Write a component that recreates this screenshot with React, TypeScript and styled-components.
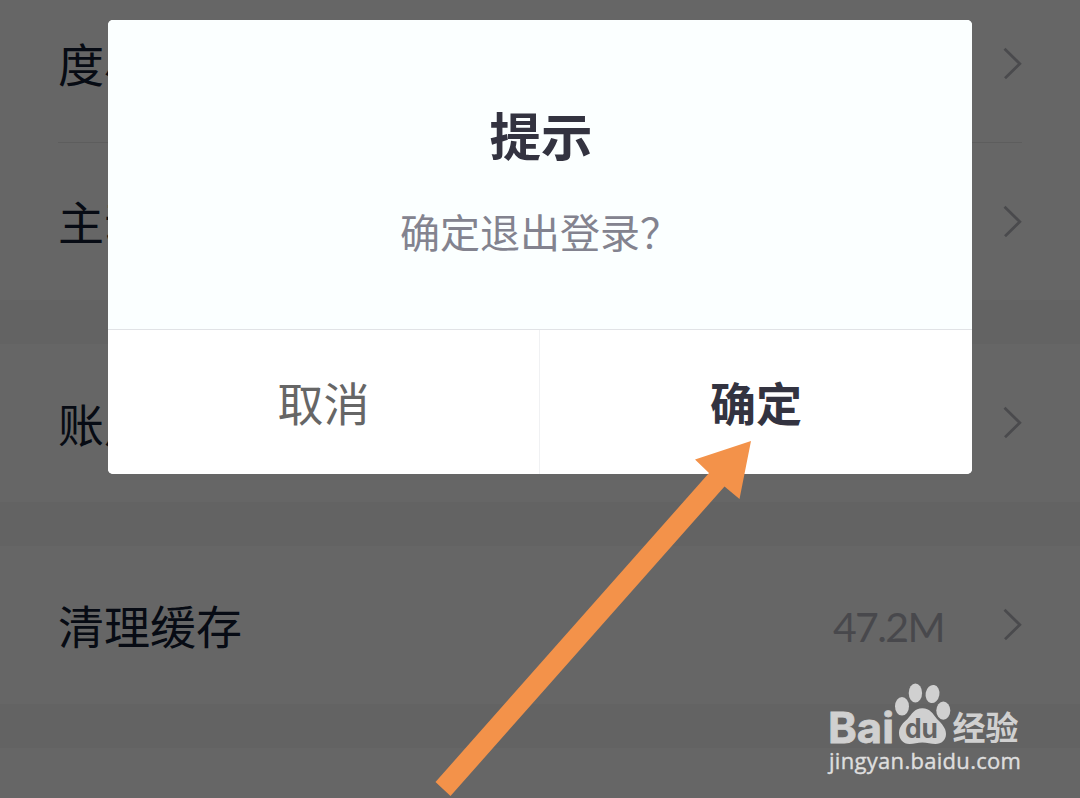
import styled, { createGlobalStyle } from 'styled-components';

const GlobalStyle = createGlobalStyle`
  * { box-sizing: border-box; }
  body {
    margin: 0;
    overflow: hidden;
    font-family: 'Noto Sans CJK SC', 'Noto Sans', sans-serif;
  }
`;

const Page = styled.div`
  position: relative;
  width: 1080px;
  height: 798px;
  overflow: hidden;
  background: #fff;
`;

const List = styled.div`
  display: flex;
  flex-direction: column;
  gap: 44px;
  margin-top: -15px;
  background: #f8f8f8;
`;

const Group = styled.div`
  background: #fff;
`;

const Row = styled.div<{ $height?: number }>`
  display: flex;
  align-items: center;
  height: ${p => p.$height || 158}px;
  padding: 0 58px;
`;

const Divider = styled.div`
  height: 1px;
  margin: 0 58px;
  background: #e8e8e8;
`;

const Label = styled.span`
  flex: 1;
  padding-bottom: 3px;
  font-size: 46px;
  line-height: 60px;
  color: #121c32;
`;

const Value = styled.span`
  padding-top: 4px;
  margin-right: 58px;
  font-family: Lato, sans-serif;
  font-size: 41px;
  line-height: 50px;
  letter-spacing: -1.6px;
  color: #b4b5bd;
`;

const Mask = styled.div`
  position: absolute;
  inset: 0;
  display: flex;
  justify-content: center;
  align-items: flex-start;
  padding-top: 20px;
  background: rgba(0, 0, 0, 0.6);
`;

const Dialog = styled.div`
  width: 864px;
  height: 454px;
  display: flex;
  flex-direction: column;
  border-radius: 5px;
  overflow: hidden;
  background: #fff;
`;

const DialogBody = styled.div`
  height: 310px;
  padding-top: 76px;
  text-align: center;
  background: #fbffff;
  border-bottom: 1px solid #e1e3e6;
`;

const Title = styled.h3`
  margin: 0 0 29px;
  padding-left: 2px;
  font-size: 51.5px;
  line-height: 76px;
  font-weight: 700;
  color: #333340;
`;

const Message = styled.p`
  margin: 0;
  font-size: 40px;
  line-height: 60px;
  color: #83838f;
`;

const Actions = styled.div`
  flex: 1;
  display: flex;
`;

const Action = styled.button<{ $primary?: boolean }>`
  width: 50%;
  padding: 0 0 2px;
  border: 0;
  border-right: ${p => (p.$primary ? '0' : '1px solid #f0f1f3')};
  background: #fff;
  font-family: inherit;
  font-size: 46px;
  line-height: 60px;
  font-weight: ${p => (p.$primary ? 700 : 400)};
  color: ${p => (p.$primary ? '#333340' : '#666')};
`;

const Overlay = styled.svg`
  position: absolute;
  left: 0;
  top: 0;
  pointer-events: none;
`;

const Watermark = styled.div`
  position: absolute;
  left: 828px;
  top: 680px;
  width: 196px;
  color: #dedede;
`;

const Logo = styled.svg`
  display: block;
  overflow: visible;
  text { font-weight: 700; }
`;

const Site = styled.div`
  padding-left: 1px;
  font-family: 'Open Sans', 'Noto Sans', sans-serif;
  font-size: 22px;
  line-height: 28px;
  letter-spacing: 0.3px;
  white-space: nowrap;
  -webkit-text-stroke: 0.4px #dedede;
`;

const Chevron = () => (
  <svg width="20" height="34" viewBox="0 0 20 34" fill="none">
    <path d="M2.5 1.8 L17.8 16.8 L3 31.3" stroke="#b9bac0" strokeWidth="2.8" />
  </svg>
);

const Arrow = () => (
  <Overlay width="1080" height="798" viewBox="0 0 1080 798">
    <polygon points="751,441 695,459.5 709,473 435.5,782 450.5,796 724.5,486.5 739.5,499" fill="#f3924a" />
  </Overlay>
);

const BaiduLogo = () => (
  <Logo width="196" height="66" viewBox="828 680 196 66" fill="#d0d0d0">
    <text x="828" y="742.5" fontFamily="Inter, sans-serif" fontSize="42" textLength="66" lengthAdjust="spacingAndGlyphs" stroke="#d0d0d0" strokeWidth="0.8">Bai</text>
    <ellipse cx="902" cy="706.3" rx="7" ry="9.3" />
    <ellipse cx="915.4" cy="693" rx="6.7" ry="9.4" />
    <ellipse cx="932.5" cy="694" rx="6.9" ry="9.1" transform="rotate(10 932.5 694)" />
    <ellipse cx="943.3" cy="710.6" rx="7" ry="9.1" />
    <path d="M922.3 708.3 C930 708.3 933 714 937 719 C942 724 946 728 946 734 C946 740 941.5 744 935.5 744 C931 744 927 742.5 922.3 742.5 C917.5 742.5 914 744 909.5 744 C903 744 899 739 899 733 C899 727 903 723 907.5 719 C912 714 914.5 708.3 922.3 708.3 Z" />
    <text x="905" y="738" fontFamily="Inter, sans-serif" fontSize="26.5" textLength="33" lengthAdjust="spacingAndGlyphs" fill="#646464">du</text>
    <text x="952.5" y="739.5" fontFamily="'Noto Sans CJK SC', sans-serif" fontSize="33">经验</text>
  </Logo>
);

const App = () => (
  <>
    <GlobalStyle />
    <Page>
      <List>
        <Group>
          <Row $height={157}><Label>度小满</Label><Chevron /></Row>
          <Divider />
          <Row $height={157}><Label>主动</Label><Chevron /></Row>
        </Group>
        <Group>
          <Row><Label>账户</Label><Chevron /></Row>
        </Group>
        <Group>
          <Row><Label>清理缓存</Label><Value>47.2M</Value><Chevron /></Row>
        </Group>
        <Group>
          <Row />
        </Group>
      </List>
      <Mask>
        <Dialog>
          <DialogBody>
            <Title>提示</Title>
            <Message>确定退出登录？</Message>
          </DialogBody>
          <Actions>
            <Action>取消</Action>
            <Action $primary>确定</Action>
          </Actions>
        </Dialog>
      </Mask>
      <Arrow />
      <Watermark>
        <BaiduLogo />
        <Site>jingyan.baidu.com</Site>
      </Watermark>
    </Page>
  </>
);

export default App;
